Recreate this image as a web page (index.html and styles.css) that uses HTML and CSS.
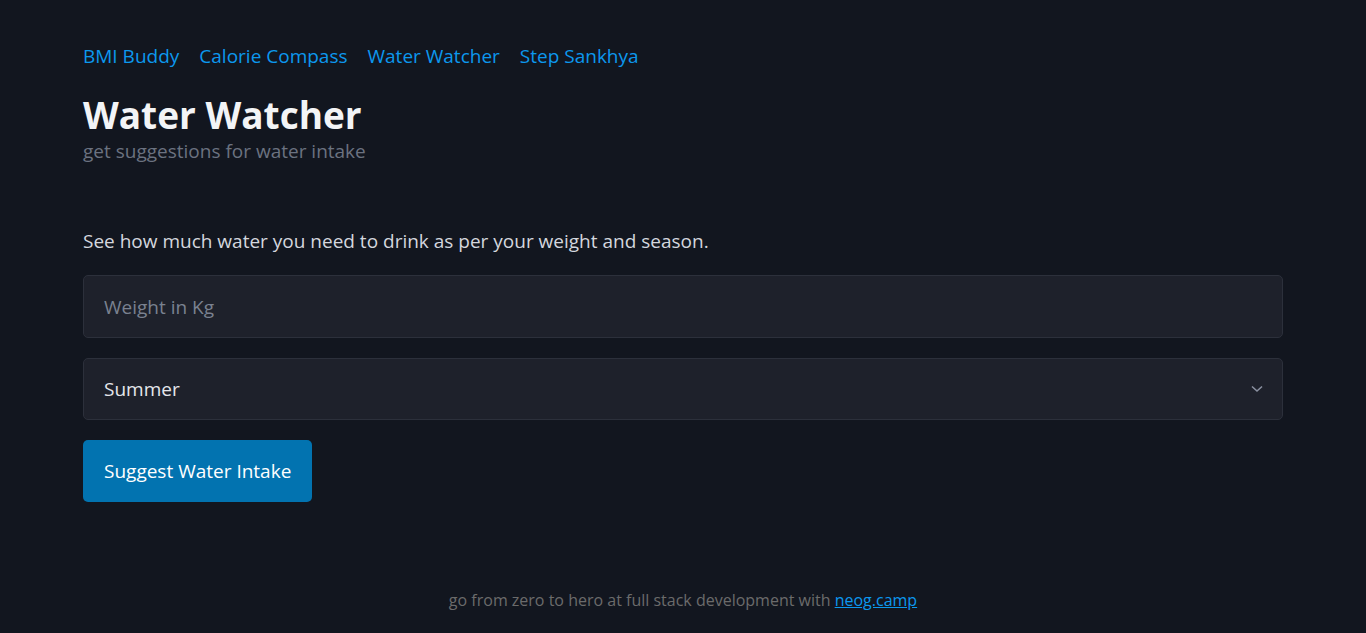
FILE: index.html
```html
<!DOCTYPE html>
<html lang="en">
<head>
<meta charset="utf-8">
<title>Water Watcher</title>
<link rel="stylesheet" href="styles.css">
</head>
<body>
<div class="page">
  <nav class="nav">
    <a href="#">BMI Buddy</a>
    <a href="#">Calorie Compass</a>
    <a href="#">Water Watcher</a>
    <a href="#">Step Sankhya</a>
  </nav>
  <header class="hero">
    <h1 class="title">Water Watcher</h1>
    <p class="subtitle">get suggestions for water intake</p>
  </header>
  <main class="main">
    <p class="lead">See how much water you need to drink as per your weight and season.</p>
    <input class="field" type="text" placeholder="Weight in Kg">
    <div class="select-wrap">
      <select class="field select">
        <option>Summer</option>
        <option>Winter</option>
      </select>
      <svg class="chevron" width="12" height="8" viewBox="0 0 12 8"><path d="M1 1.5 L6 6 L11 1.5" fill="none" stroke="#8a90a0" stroke-width="1.6"/></svg>
    </div>
    <button class="btn" type="button">Suggest Water Intake</button>
  </main>
  <footer class="footer">go from zero to hero at full stack development with <a href="#">neog.camp</a></footer>
</div>
</body>
</html>
```
FILE: styles.css
```css
* { box-sizing: border-box; }
html, body { margin: 0; padding: 0; }
body {
  background: #12161f;
  color: #d4d7de;
  font-family: "Open Sans", "Noto Sans", sans-serif;
  height: 633px;
  overflow: hidden;
}
.page {
  width: 1200px;
  margin: 0 auto;
  padding-top: 42px;
  display: flex;
  flex-direction: column;
}
.nav {
  display: flex;
  gap: 20px;
  font-size: 19px;
  line-height: 28px;
}
.nav a { color: #0c98ee; text-decoration: none; }
.hero { margin-top: 23px; }
.title {
  margin: 0;
  font-size: 37px;
  line-height: 44px;
  font-weight: 700;
  color: #f3f4f6;
}
.subtitle {
  margin: 1px 0 0;
  font-size: 19px;
  line-height: 26px;
  color: #6b7280;
}
.main {
  margin-top: 64px;
  display: flex;
  flex-direction: column;
  gap: 20px;
  align-items: flex-start;
}
.lead {
  margin: 0 0 1px;
  font-size: 19px;
  line-height: 26px;
  color: #d4d7de;
}
.field {
  width: 1200px;
  height: 63px;
  background: #1e212b;
  border: 1px solid #2c303b;
  border-radius: 5px;
  padding: 0 20px;
  font-family: inherit;
  font-size: 19px;
  color: #e5e7eb;
  outline: none;
}
.field::placeholder { color: #7a8190; }
.select-wrap { position: relative; height: 62px; }
.select { height: 62px; appearance: none; -webkit-appearance: none; }
.chevron { position: absolute; right: 20px; top: 27px; }
.btn {
  height: 62px;
  padding: 0 21px;
  background: #0273b0;
  color: #ffffff;
  border: none;
  border-radius: 5px;
  font-family: inherit;
  font-size: 19px;
}
.footer {
  margin-top: 87px;
  text-align: center;
  font-size: 16px;
  line-height: 22px;
  color: #6b6b6b;
}
.footer a { color: #0c98ee; }
```
